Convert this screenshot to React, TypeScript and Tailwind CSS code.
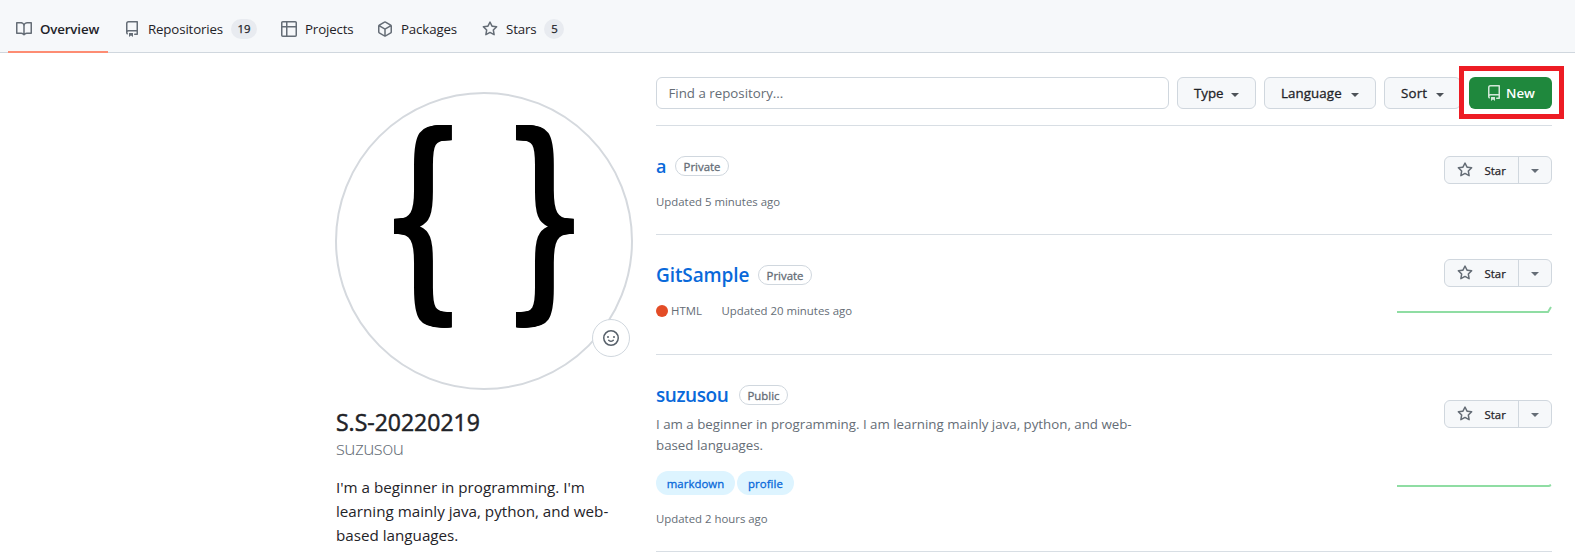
import React from 'react';

const icons = {
  book: 'M0 1.75A.75.75 0 01.75 1h4.253c1.227 0 2.317.59 3 1.501A3.744 3.744 0 0111.006 1h4.245a.75.75 0 01.75.75v10.5a.75.75 0 01-.75.75h-4.507a2.25 2.25 0 00-1.591.659l-.622.621a.75.75 0 01-1.06 0l-.622-.621A2.25 2.25 0 005.258 13H.75a.75.75 0 01-.75-.75V1.75zm8.755 3a2.25 2.25 0 012.25-2.25H14.5v9h-3.757c-.71 0-1.4.201-1.992.572l.004-7.322zm-1.504 7.324l.004-5.073-.002-2.253A2.25 2.25 0 005.003 2.5H1.5v9h3.757a3.75 3.75 0 011.994.574z',
  repo: 'M2 2.5A2.5 2.5 0 014.5 0h8.75a.75.75 0 01.75.75v12.5a.75.75 0 01-.75.75h-2.5a.75.75 0 110-1.5h1.75v-2h-8a1 1 0 00-.714 1.7.75.75 0 01-1.072 1.05A2.495 2.495 0 012 11.5v-9zm10.5-1V9h-8c-.356 0-.694.074-1 .208V2.5a1 1 0 011-1h8zM5 12.25v3.25a.25.25 0 00.4.2l1.45-1.087a.25.25 0 01.3 0L8.6 15.7a.25.25 0 00.4-.2v-3.25a.25.25 0 00-.25-.25h-3.5a.25.25 0 00-.25.25z',
  table: 'M0 1.75C0 .784.784 0 1.75 0h12.5C15.216 0 16 .784 16 1.75v12.5A1.75 1.75 0 0114.25 16H1.75A1.75 1.75 0 010 14.25V1.75zM1.5 6.5v7.75c0 .138.112.25.25.25H5v-8H1.5zM5 5H1.5V1.75a.25.25 0 01.25-.25H5V5zm1.5 1.5v8h7.75a.25.25 0 00.25-.25V6.5h-8zm8-1.5h-8V1.5h7.75a.25.25 0 01.25.25V5z',
  package: 'M8.878.392a1.75 1.75 0 00-1.756 0l-5.25 3.045A1.75 1.75 0 001 4.951v6.098c0 .624.332 1.2.872 1.514l5.25 3.045a1.75 1.75 0 001.756 0l5.25-3.045c.54-.313.872-.89.872-1.514V4.951c0-.624-.332-1.2-.872-1.514L8.878.392zM7.875 1.69a.25.25 0 01.25 0l4.63 2.685L8 7.133 3.245 4.375l4.63-2.685zM2.5 5.677v5.372c0 .09.047.171.125.216l4.625 2.683V8.432L2.5 5.677zm6.25 8.271l4.625-2.683a.25.25 0 00.125-.216V5.677L8.75 8.432v5.516z',
  star: 'M8 .25a.75.75 0 01.673.418l1.882 3.815 4.21.612a.75.75 0 01.416 1.279l-3.046 2.97.719 4.192a.75.75 0 01-1.088.791L8 12.347l-3.766 1.98a.75.75 0 01-1.088-.79l.72-4.194L.818 6.374a.75.75 0 01.416-1.28l4.21-.611L7.327.668A.75.75 0 018 .25zm0 2.445L6.615 5.5a.75.75 0 01-.564.41l-3.097.45 2.24 2.184a.75.75 0 01.216.664l-.528 3.084 2.769-1.456a.75.75 0 01.698 0l2.77 1.456-.53-3.084a.75.75 0 01.216-.664l2.24-2.183-3.096-.45a.75.75 0 01-.564-.41L8 2.694v.001z',
  smiley: 'M1.5 8a6.5 6.5 0 1113 0 6.5 6.5 0 01-13 0zM8 0a8 8 0 100 16A8 8 0 008 0zM5 8a1 1 0 100-2 1 1 0 000 2zm7-1a1 1 0 11-2 0 1 1 0 012 0zM5.32 9.636a.75.75 0 011.038.175l.007.009c.103.118.22.222.35.31.264.178.683.37 1.285.37.602 0 1.02-.192 1.285-.371.13-.088.247-.192.35-.31l.007-.008a.75.75 0 111.222.87 3.3 3.3 0 01-.728.666c-.63.418-1.37.653-2.136.653-.946 0-1.652-.308-2.126-.63a3.32 3.32 0 01-.736-.686.75.75 0 01.182-1.058z',
};

function Icon({ name, className = 'text-[#656d76]' }: { name: keyof typeof icons; className?: string }) {
  return (
    <svg viewBox="0 0 16 16" className={`size-4 shrink-0 ${className}`} fill="currentColor" fillRule="evenodd" aria-hidden="true">
      <path d={icons[name]} />
    </svg>
  );
}

function Caret({ className }: { className: string }) {
  return <span className={`size-0 border-x-4 border-t-4 border-x-transparent ${className}`} />;
}

function Tab({ icon, label, count, active, className }: { icon: keyof typeof icons; label: string; count?: number; active?: boolean; className: string }) {
  return (
    <a className={`flex h-[53px] items-start border-b-2 pt-[19px] ${active ? 'border-[#fd8c73] font-semibold' : 'border-transparent'} ${className}`}>
      <span className="flex h-5 items-center gap-2">
        <Icon name={icon} />
        <span className="pt-px text-[13.3px] tracking-[-0.15px]">{label}</span>
        {count !== undefined && (
          <span className="flex h-5 min-w-5 items-center justify-center rounded-full bg-[#e8ebf0] px-[6.5px] text-[11.4px] font-medium [-webkit-text-stroke:0.25px]">{count}</span>
        )}
      </span>
    </a>
  );
}

function FilterButton({ label, className }: { label: string; className: string }) {
  return (
    <button className={`flex h-8 shrink-0 items-center justify-between rounded-md border border-[#d0d7de] bg-[#f6f8fa] pt-px pl-4 text-[13.3px] font-medium [-webkit-text-stroke:0.3px] ${className}`}>
      {label}
      <Caret className="mt-[2px] border-t-[#4d5258]" />
    </button>
  );
}

function StarButton() {
  return (
    <div className="flex h-7 w-[108px] rounded-md border border-[#d0d7de] bg-[#f6f8fa]">
      <button className="flex w-[74px] items-center border-r border-[#d0d7de] pl-3 text-[11.4px] font-medium">
        <Icon name="star" />
        <span className="ml-[11.5px] pt-px [-webkit-text-stroke:0.25px]">Star</span>
      </button>
      <button className="flex flex-1 items-center justify-center pt-px">
        <Caret className="border-t-[#656d76]" />
      </button>
    </div>
  );
}

function RepoTitle({ name, visibility, className, badge }: { name: string; visibility: string; className: string; badge: string }) {
  return (
    <h3 className="flex h-[30px] items-center">
      <a className={`font-semibold text-[#0969da] ${className}`}>{name}</a>
      <span className={`flex h-5 items-center justify-center rounded-full border border-[#d0d7de] pt-px text-[11.4px] font-medium text-[#656d76] [-webkit-text-stroke:0.3px] ${badge}`}>{visibility}</span>
    </h3>
  );
}

function Spark({ points }: { points: string }) {
  return (
    <svg className="h-[10px] w-[155px]" viewBox="0 0 155 10" fill="none" aria-hidden="true">
      <polyline points={points} stroke="#8fdda3" strokeWidth="2" />
    </svg>
  );
}

export default function App() {
  return (
    <div className="h-[555px] overflow-hidden bg-white font-['Open_Sans','Noto_Sans',sans-serif] text-[#1f2328]">
      <nav className="flex h-[53px] border-b border-[#d0d7de] bg-[#f6f8fa]">
        <Tab icon="book" label="Overview" active className="ml-2 w-[100px] pl-2" />
        <Tab icon="repo" label="Repositories" count={19} className="ml-2 w-[148px] pl-2" />
        <Tab icon="table" label="Projects" className="ml-2 w-[89px] pl-[9px]" />
        <Tab icon="package" label="Packages" className="ml-2 w-[96px] pl-2" />
        <Tab icon="star" label="Stars" count={5} className="ml-2 w-[100px] pl-[9px]" />
      </nav>

      <div className="flex">
        <aside className="ml-[335px] w-[320px] shrink-0 pt-[39px]">
          <div className="relative size-[298px] rounded-full border-2 border-[#d5d9de]">
            <div className="flex h-[244px] items-center justify-center font-['DejaVu_Sans'] text-[220px] leading-none text-black">
              <span className="-mx-[9px] w-[140px] shrink-0 scale-x-[0.6] [text-shadow:-6px_0_#000,-4px_0_#000,-2px_0_#000,2px_0_#000,4px_0_#000,6px_0_#000]">{'{'}</span>
              <span className="-mx-[9px] w-[140px] shrink-0 scale-x-[0.6] [text-shadow:-6px_0_#000,-4px_0_#000,-2px_0_#000,2px_0_#000,4px_0_#000,6px_0_#000]">{'}'}</span>
            </div>
            <button className="absolute right-[1px] bottom-[31px] flex size-[38px] items-center justify-center rounded-full border border-[#d0d7de] bg-white">
              <Icon name="smiley" className="text-[#57606a]" />
            </button>
          </div>
          <div className="pl-px">
            <h1 className="mt-[17px] text-[23px] leading-[30px] font-medium [-webkit-text-stroke:0.5px]">S.S-20220219</h1>
            <p className="-mt-px text-[19px] leading-6 font-light tracking-[-0.55px] text-[#656d76]">suzusou</p>
            <p className="mt-[15px] w-[290px] text-[15.2px] leading-6">
              I'm a beginner in programming. I'm
              <br />
              learning mainly java, python, and web-
              <br />
              based languages.
            </p>
          </div>
        </aside>

        <main className="ml-[1px] w-[896px] shrink-0 pt-6">
          <div className="flex h-[49px] items-start border-b border-[#d8dee4]">
            <div className="flex h-8 w-[513px] shrink-0 items-center rounded-md border border-[#d0d7de] pt-px pl-[11.5px] text-[13.3px] text-[#656d76]">Find a repository...</div>
            <FilterButton label="Type" className="ml-2 w-[79px] pr-4" />
            <FilterButton label="Language" className="ml-2 w-[112px] pr-4 tracking-[0.1px]" />
            <FilterButton label="Sort" className="ml-2 w-[77px] pr-4 tracking-[0.2px]" />
            <div className="-mt-[11px] -mr-3 -ml-[2px] shrink-0 border-[5px] border-[#ed1c24] bg-white py-[5px] pt-[6px] pr-[7px] pl-[5px]">
              <button className="flex h-8 w-[83px] items-center justify-center rounded-md bg-[#1f883d] text-[13.3px] font-semibold text-white">
                <Icon name="repo" className="text-white/80" />
                <span className="ml-1 pt-px">New</span>
              </button>
            </div>
          </div>

          <article className="flex h-[109px] justify-between border-b border-[#d8dee4] pt-[25px]">
            <div>
              <RepoTitle name="a" visibility="Private" className="w-[19px] text-[18px]" badge="w-[54px]" />
              <p className="mt-[12px] text-[11.4px] leading-[18px] text-[#656d76]">Updated 5 minutes ago</p>
            </div>
            <div className="pt-[5px]">
              <StarButton />
            </div>
          </article>

          <article className="flex h-[120px] justify-between border-b border-[#d8dee4] pt-6">
            <div>
              <div className="pt-px">
                <RepoTitle name="GitSample" visibility="Private" className="w-[102px] text-[19px] tracking-[-0.1px]" badge="w-[54px]" />
              </div>
              <p className="mt-[12px] flex items-center text-[11.4px] leading-[18px] text-[#656d76]">
                <span className="mr-[3px] size-3 rounded-full bg-[#e34c26]" />
                <span className="w-[50.5px]">HTML</span>
                <span>Updated 20 minutes ago</span>
              </p>
            </div>
            <div className="flex flex-col items-end">
              <StarButton />
              <div className="mt-[19px]">
                <Spark points="0,6 151,6 154,1" />
              </div>
            </div>
          </article>

          <article className="flex h-[197px] justify-between border-b border-[#d8dee4] pt-[25px]">
            <div>
              <RepoTitle name="suzusou" visibility="Public" className="w-[83px] text-[19px] tracking-[-0.45px]" badge="w-[49px]" />
              <p className="mt-[4px] text-[13.3px] leading-[21px] text-[#656d76]">
                I am a beginner in programming. I am learning mainly java, python, and web-
                <br />
                based languages.
              </p>
              <div className="mt-[15px] flex gap-[2px] text-[11.4px] font-medium tracking-[0.05px] text-[#0969da] [-webkit-text-stroke:0.3px]">
                <span className="flex h-6 w-[79px] items-center justify-center rounded-full bg-[#ddf4ff] pt-px">markdown</span>
                <span className="flex h-6 w-[57px] items-center justify-center rounded-full bg-[#ddf4ff] pt-px">profile</span>
              </div>
              <p className="mt-[15px] text-[11.4px] leading-[18px] text-[#656d76]">Updated 2 hours ago</p>
            </div>
            <div className="flex flex-col items-end pt-5">
              <StarButton />
              <div className="mt-[52px]">
                <Spark points="0,6 152,6 154,5" />
              </div>
            </div>
          </article>
        </main>
      </div>
    </div>
  );
}
